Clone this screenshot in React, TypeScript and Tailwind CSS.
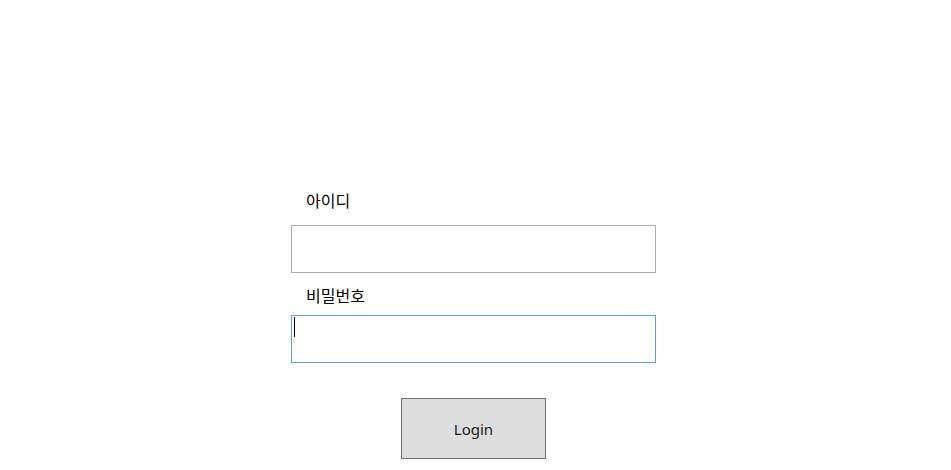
export default function App() {
  return (
    <div
      className="w-[951px] h-[470px] bg-white overflow-hidden"
      style={{ fontFamily: '"Noto Sans", "Noto Sans CJK KR", sans-serif' }}
    >
      <div className="pt-[190px] pl-[291px] flex flex-col w-[656px]">
        <label className="pl-[15px] h-[22px] leading-[22px] text-[16px] text-black">아이디</label>
        <div className="mt-[13px] w-[365px] h-[48px] border border-[#abadb3] bg-white" />
        <label className="mt-[12px] pl-[15px] h-[22px] leading-[22px] text-[16px] text-black">비밀번호</label>
        <div className="mt-[8px] w-[365px] h-[48px] border border-[#569de5] bg-white relative">
          <span className="absolute left-[2px] top-[1px] w-[1px] h-[20px] bg-black" />
        </div>
        <button className="mt-[35px] ml-[110px] w-[145px] h-[61px] pt-[2px] border border-[#707070] bg-[#dddddd] text-[15px] text-[#1a1a1a]">
          Login
        </button>
      </div>
    </div>
  );
}
